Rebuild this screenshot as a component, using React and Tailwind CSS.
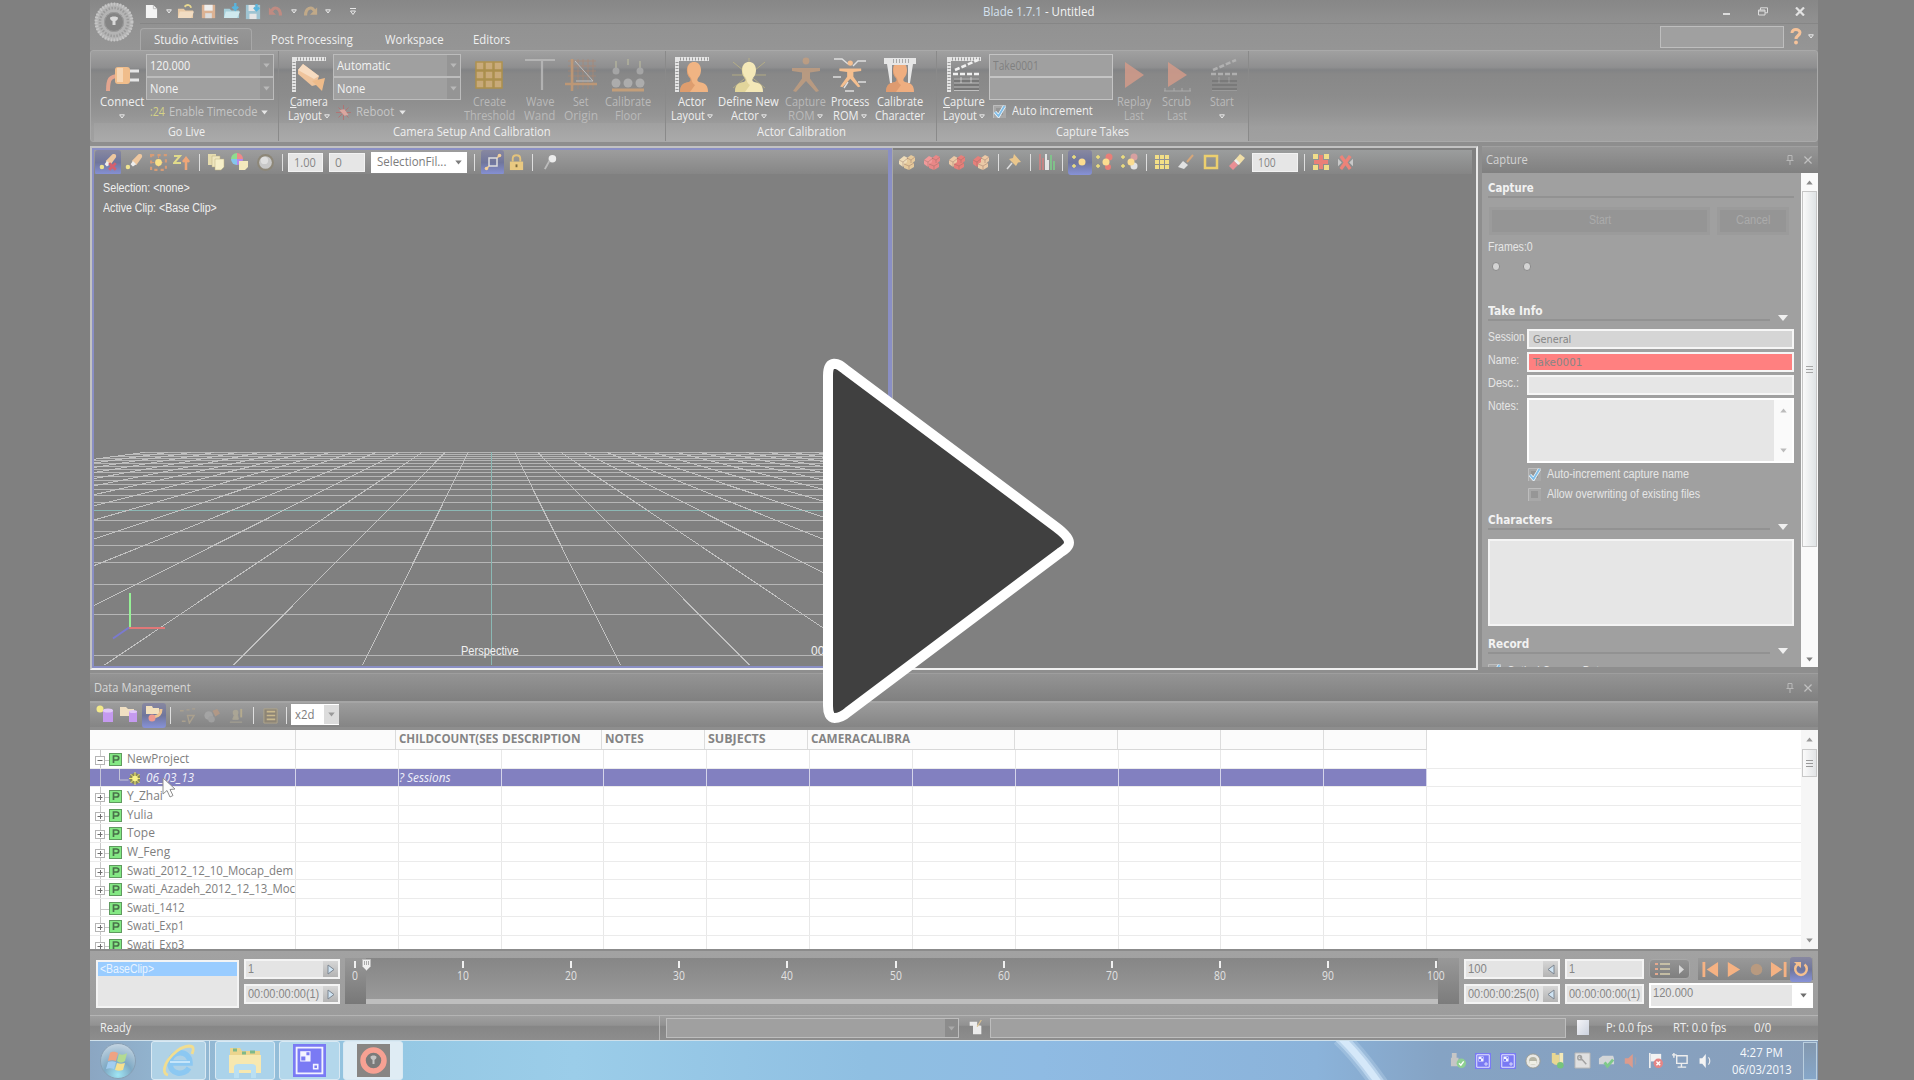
import React, { useLayoutEffect, useRef, useState } from "react";

/* Single-line label squeezed or stretched to a fixed width. */
function T({ w, className = "", children }) {
  const ref = useRef(null);
  const [k, setK] = useState(1);
  useLayoutEffect(() => {
    const n = ref.current.offsetWidth;
    if (n) setK(w / n);
  }, [w]);
  return (
    <span className={"inline-block whitespace-nowrap text-left " + className} style={{ width: w }}>
      <span ref={ref} className="inline-block origin-left" style={{ transform: `scaleX(${k})` }}>
        {children}
      </span>
    </span>
  );
}

const Sep = ({ c = "w-3" }) => (
  <div className={"flex shrink-0 justify-center " + c}>
    <div className="h-[17px] w-px bg-[#dedede]" />
  </div>
);

const Slot = ({ c, on, children }) => (
  <div
    className={
      "flex h-[25px] shrink-0 items-center justify-center " +
      c +
      (on ? " rounded-[3px] bg-gradient-to-b from-[#8888a0] via-[#70769c] to-[#8792d8]" : "")
    }
  >
    {children}
  </div>
);

const I = ({ s = 18, h, vb = "0 0 18 18", c = "", children }) => (
  <svg width={s} height={h || s} viewBox={vb} fill="none" className={"shrink-0 " + c}>
    {children}
  </svg>
);

const Down = ({ c = "text-[#e6e6e6]" }) => (
  <svg width="7" height="5" viewBox="0 0 7 5" className={"shrink-0 " + c}>
    <path d="M.3.5h6.4L3.5 4.5z" fill="currentColor" />
  </svg>
);
const DownO = () => (
  <svg width="6" height="5" viewBox="0 0 6 5" className="shrink-0">
    <path d="M.6.8h4.8L3 4z" fill="#999" stroke="#e8e8e8" strokeWidth="1" />
  </svg>
);

const Ruler = () => (
  <>
    <path d="M0 0h34v4H4v31H0z" fill="#e4e4e4" />
    <path d="M5 2h28M2 5v29" stroke="#9b9b9b" strokeWidth="3" strokeDasharray="1 2" />
  </>
);
const Bust = ({ a, b, x = 0 }) => (
  <g transform={`translate(${x} 0)`}>
    <path d="M0 35c0-7 3-9 9-10 2-1 2-2 1-4C5 16 6 5 14 5s9 11 4 16c-1 2-1 3 1 4 6 1 9 3 9 10z" fill={a} />
    <path d="M13 5C6 6 6 16 11 21c1 3 1 5 4 7l-5 7H0c0-7 3-9 9-10 2-1 2-2 1-4C5 16 6 6 13 5z" fill={b} opacity=".55" />
  </g>
);
const Man = ({ c }) => (
  <>
    <circle cx="17" cy="4" r="3.400" fill={c} />
    <path d="M3 11h28v3l-10 1.500v6L30 34l-3 1-10-11L7 35l-3-1 9-12.500v-6L3 14z" fill={c} />
  </>
);
const Clapper = ({ c }) => (
  <>
    <path d="M8 13L31 3M6 17h27" stroke={c} strokeWidth="2.600" strokeDasharray="5 2" />
    <path d="M7 21h25v13H7z" fill="#777" />
    <path d="M7 22h25M7 26h25M7 30h25M14 20v6M24 20v6M7 33.500h25" stroke={c} strokeWidth="1" opacity=".6" />
  </>
);

function BigBtn({ c, icon, a, aw, b, bw, arrow, dim, under }) {
  return (
    <div className={"flex shrink-0 flex-col items-center pt-[6px] " + c + (dim ? " text-[#bababa]" : " text-[#efefef]")}>
      <svg width="34" height="36" viewBox="0 0 34 36" fill="none" className={dim ? "opacity-80" : ""}>
        {icon}
      </svg>
      <div className={"mt-[2px] h-[14px] leading-[14px]" + (under ? " first-letter:underline" : "")}>
        <T w={aw}>{under ? <><u>{a[0]}</u>{a.slice(1)}</> : a}</T>
      </div>
      <div className="flex h-[14px] items-center gap-[2px] leading-[14px]">
        {b && <T w={bw}>{b}</T>}
        {arrow && <DownO />}
      </div>
    </div>
  );
}

function Group({ c, label, lw, children }) {
  return (
    <div className={"flex h-[90px] shrink-0 flex-col border-r border-[#8a8a8a] " + c}>
      <div className="flex h-[72px]">{children}</div>
      <div className="flex h-[18px] items-center justify-center bg-gradient-to-b from-[#a0a0a0] to-[#aaaaaa] leading-[16px] text-[#efefef]">
        <T w={lw}>{label}</T>
      </div>
    </div>
  );
}

function Combo({ v, w }) {
  return (
    <div className="flex h-[23px] w-[128px] items-center border border-[#bcbcbc] bg-[#a0a0a0] pl-[3px] leading-[18px] text-[#f3f3f3]">
      <T w={w}>{v}</T>
      <div className="ml-auto flex h-full w-[13px] items-center justify-center bg-[#959595]">
        <Down c="text-[#b8b8b8]" />
      </div>
    </div>
  );
}

const Check = ({ on }) => (
  <svg width="13" height="13" viewBox="0 0 13 13" className="shrink-0">
    <path d="M0 0h13v13H0z" fill="#a8a8a8" />
    <path d="M.5 13V.5H13" fill="none" stroke="#bdbdbd" />
    <path d="M3 3h7v7H3z" fill="#969696" />
    {on && (
      <>
        <path d="M2 7l3.500 4L11.500 1" fill="none" stroke="#eef7fc" strokeWidth="3.400" />
        <path d="M2 7l3.500 4L11.500 1" fill="none" stroke="#7fbde8" strokeWidth="1.800" />
      </>
    )}
  </svg>
);

const Pin = () => (
  <svg width="8" height="10" viewBox="0 0 8 10" fill="none" stroke="#b8b8b8">
    <path d="M2 .5h4v5H2zM.5 5.500h7M4 5.500V10" />
  </svg>
);
const X = () => (
  <svg width="8" height="8" viewBox="0 0 9 9" stroke="#c0c0c0" strokeWidth="1.400">
    <path d="M.5.5l8 8M8.500.5l-8 8" />
  </svg>
);

function TitleBar() {
  return (
    <div className="flex h-[50px] bg-gradient-to-b from-[#878787] via-[#929292] to-[#959595]">
      <div className="flex w-[50px] justify-center pr-[2px] pt-[2px]">
        <svg width="40" height="40" viewBox="0 0 40 40">
          <circle cx="20" cy="20" r="14.500" fill="none" stroke="#b4b4b4" strokeWidth="9" />
          <circle cx="20" cy="20" r="18" fill="none" stroke="#c6c6c6" strokeWidth="3" strokeDasharray="1.500 1.500" />
          <circle cx="20" cy="20" r="14" fill="none" stroke="#9b9b9b" strokeWidth="2.500" strokeDasharray="1.500 1.500" />
          <circle cx="20" cy="20" r="9.500" fill="#858585" stroke="#9c9c9c" />
          <path d="M16 16c0-2 8-2 8 0s-2 3-2.500 3v4h-3v-4c-.5 0-2.500-1-2.500-3z" fill="#dadada" />
        </svg>
      </div>
      <div className="flex min-w-0 flex-1 flex-col">
        <div className="flex h-6 items-center border-b border-[#868686]">
          <div className="flex w-[260px] items-center">
            <Slot c="w-[22px]"><I s={13} h={15} vb="0 0 14 16"><path d="M1 1h8l4 4v10H1z" fill="#f4f4f4" /><path d="M9 1v4h4" stroke="#bbb" /></I></Slot>
            <Slot c="w-[13px]"><DownO /></Slot>
            <Slot c="w-[20px]"><I s={17}><path d="M1 6h6l2 2h8v8H1z" fill="#e8c9a4" /><path d="M3 9h15l-3 7H1z" fill="#f1dcc2" /><path d="M8 4c3-3 6-2 7 1" stroke="#e8d890" strokeWidth="2" /></I></Slot>
            <Slot c="w-[26px]"><I s={15}><path d="M1 1h16v16H1z" fill="#dcb293" /><path d="M4 1h10v7H4z" fill="#eee" /><path d="M5 11h8v6H5z" fill="#ddd" /></I></Slot>
            <Slot c="w-[20px]"><I s={17}><path d="M1 6h6l2 2h8v8H1z" fill="#a6cfda" /><path d="M3 9h15l-3 7H1z" fill="#cfe9ee" /><path d="M13 0v6M10 4l3 3 3-3" stroke="#59b4dc" strokeWidth="2.500" /></I></Slot>
            <Slot c="w-[24px]"><I s={16}><path d="M1 1h16v16H1z" fill="#9fc4d2" /><path d="M4 1h7v7H4zM5 11h8v6H5z" fill="#e6e6e6" /><path d="M13 0v6M10 4l3 3 3-3" stroke="#59b4dc" strokeWidth="2.500" /></I></Slot>
            <Slot c="w-[22px]"><I s={16}><path d="M4 8C7 2 14 4 14 13" stroke="#bf8b82" strokeWidth="3.500" /><path d="M1 4v8h8z" fill="#bf8b82" /></I></Slot>
            <Slot c="w-[13px]"><DownO /></Slot>
            <Slot c="w-[20px]"><I s={16}><path d="M14 8C11 2 4 4 4 13" stroke="#c1a988" strokeWidth="3.500" /><path d="M17 4v8H9z" fill="#c1a988" /></I></Slot>
            <Slot c="w-[15px]"><DownO /></Slot>
            <Slot c="w-[36px]"><I s={6} h={8} vb="0 0 6 8"><path d="M0 .5h6M.5 3h5L3 6.500z" stroke="#e6e6e6" /></I></Slot>
          </div>
          <div className="ml-[583px] text-[12px] leading-[18px] text-[#f4f4f4]">
            <T w={111}><span className="text-[#d5e2ef]">Blade 1.7.1</span> - Untitled</T>
          </div>
          <div className="ml-auto flex items-center gap-[27px] pr-[13px]">
            <div className="mr-px mt-1 h-[2px] w-[7px] bg-[#dcdcdc]" />
            <svg width="10" height="9" viewBox="0 0 10 9" fill="none" stroke="#dcdcdc"><path d="M.5 3h6.500v5H.5zM2.500 3V.8h7v5H7M.5 4h6.500" /></svg>
            <svg width="10" height="9" viewBox="0 0 10 9" stroke="#e2e2e2" strokeWidth="2.200"><path d="M1 .5l8 8M9 .5l-8 8" /></svg>
          </div>
        </div>
        <div className="flex h-[26px] text-[12px] leading-[21px] text-[#f0f0f0]">
          <div className="mt-[4px] h-[22px] w-[112px] rounded-t-[4px] border border-b-0 border-[#a8a8a8] bg-gradient-to-b from-[#969696] to-[#8e8e8e] pl-[13px] pt-px leading-[19px]"><T w={84}>Studio Activities</T></div>
          <div className="ml-[19px] mt-[5px]"><T w={82}>Post Processing</T></div>
          <div className="ml-[32px] mt-[5px]"><T w={59}>Workspace</T></div>
          <div className="ml-[29px] mt-[5px]"><T w={37}>Editors</T></div>
          <div className="ml-auto mt-[2px] h-[22px] w-[124px] border border-[#bebebe] bg-[#a0a0a0]" />
          <svg width="12" height="18" viewBox="0 0 12 18" className="ml-[6px] mt-[4px]" fill="none"><path d="M2 5c0-5 8-4 8-.500 0 3-4 3-4 6.500" stroke="#f6c39a" strokeWidth="3" /><circle cx="6" cy="14.500" r="1.900" fill="#f6c39a" /></svg>
          <div className="ml-[6px] mr-[4px] mt-[10px]"><DownO /></div>
        </div>
      </div>
    </div>
  );
}

function Ribbon() {
  return (
    <div className="flex h-[92px] rounded-[3px] border border-[#a9a9a9] bg-[linear-gradient(#a0a0a0,#8f8f90_18%,#828385_21%,#888_26%,#8c8c8c_50%,#949494_70%,#9e9e9e_85%,#a0a0a0)] pl-[3px] text-[12px]">
      <Group c="w-[185px]" label="Go Live" lw={37}>
        <BigBtn c="w-[53px] pl-[2px]" a="Connect" aw={44} arrow icon={<><path d="M3 34c0-12 2-15 11-15" stroke="#e3a58f" strokeWidth="4" /><rect x="10" y="10" width="15" height="17" rx="3" fill="#f0bd8b" /><path d="M12 11h6v14h-6z" fill="#f6d6b4" /><path d="M25 14h9M25 23h9" stroke="#e6e6e6" strokeWidth="3" /></>} />
        <div className="-ml-px flex flex-col pt-[3px]">
          <Combo v="120.000" w={40} />
          <Combo v="None" w={28} />
          <div className="mt-[2px] flex h-[20px] items-center gap-1 pl-[4px] leading-[18px] text-[#c6c6c6]">
            <span className="text-[#d5d386]"><T w={15}>:24</T></span>
            <T w={88}>Enable Timecode</T><Down />
          </div>
        </div>
      </Group>
      <Group c="w-[387px]" label="Camera Setup And Calibration" lw={158}>
        <BigBtn c="w-[54px] pl-[6px]" a="Camera" under aw={38} b="Layout" bw={34} arrow icon={<><Ruler /><path d="M6 13l5-6 16 12-3 9-4 1L6 17z" fill="#efc49c" /><path d="M6 13l5-6 16 12-5 3z" fill="#f7dcc1" /><path d="M20 24l13-3-3 13z" fill="#eebb8a" /></>} />
        <div className="flex flex-col pt-[3px]">
          <Combo v="Automatic" w={53} />
          <Combo v="None" w={28} />
          <div className="mt-[2px] flex h-[20px] items-center gap-[5px] pl-[3px] leading-[18px] text-[#c6c6c6]">
            <I s={15}><path d="M9 0v18M0 9h18M3 3l12 12M15 3L3 15" stroke="#b56f6f" strokeWidth="1" /><path d="M4 6l6-1 5 7-5 1z" fill="#dba7a0" /></I>
            <T w={38}>Reboot</T><Down />
          </div>
        </div>
        <BigBtn c="w-[56px]" dim a="Create" aw={33} b="Threshold" bw={51} icon={<>{[0, 1, 2].map((r) => [0, 1, 2].map((q) => <rect key={r + "-" + q} x={4 + q * 9} y={5 + r * 9} width="8" height="8" fill="#d8b276" stroke="#b6923e" strokeWidth="1.500" />))}</>} />
        <BigBtn c="w-[45px]" dim a="Wave" aw={28} b="Wand" bw={31} icon={<path d="M2 3h30M19 4v29" stroke="#bcbcbc" strokeWidth="2.200" />} />
        <BigBtn c="w-[38px]" dim a="Set" aw={16} b="Origin" bw={34} icon={<><path d="M4 4h28M4 9h28M4 14h28M4 19h28M9 2v30M14 2v30M19 2v30M24 2v30M29 2v30" stroke="#b08872" strokeWidth=".8" /><path d="M8 2v32M1 27h32" stroke="#c99b72" strokeWidth="2.500" /><path d="M11 4l18 20H12" stroke="#ccc" /></>} />
        <BigBtn c="w-[54px] pl-[2px]" dim a="Calibrate" aw={46} b="Floor" bw={27} icon={<><path d="M5 14V4M17 8V2M29 14V4" stroke="#b0b09c" strokeWidth="2" /><path d="M1 33h32" stroke="#d0a377" strokeWidth="3" />{[5, 17, 29].map((x) => <circle key={x} cx={x} cy="26" r="4.500" fill="#b5b5b5" />)}<circle cx="5" cy="14" r="3.500" fill="#adadad" /><circle cx="29" cy="14" r="3.500" fill="#adadad" /></>} />
      </Group>
      <Group c="w-[271px]" label="Actor Calibration" lw={89}>
        <BigBtn c="w-[50px] pl-[1px]" a="Actor" aw={28} b="Layout" bw={34} arrow icon={<><Ruler /><Bust a="#f0b483" b="#cf8b5c" x={5} /></>} />
        <BigBtn c="w-[64px] pl-[1px]" a="Define New" aw={61} b="Actor" bw={28} arrow icon={<><path d="M1 5l32 26M33 5L1 31M0 18h34M17 1v20" stroke="#bdb483" strokeWidth=".8" /><Bust a="#f4e8b8" b="#d3c483" x={3} /></>} />
        <BigBtn c="w-[48px] pl-[3px]" dim a="Capture" aw={41} b="ROM" bw={27} arrow icon={<Man c="#c49f80" />} />
        <BigBtn c="w-[43px]" a="Process" aw={38} b="ROM" bw={26} arrow icon={<><path d="M1 2h8l6 5M33 4h-8l-5 5M0 20h8M33 25h-8M12 34h9M11 31l4-6" stroke="#dedede" strokeWidth="1.400" /><g transform="translate(4 3) scale(.78)"><Man c="#f5bf8f" /></g></>} />
        <BigBtn c="w-[57px]" a="Calibrate" aw={46} b="Character" bw={50} icon={<><Bust a="#efae80" b="#cf8c62" x={3} /><path d="M1 1h32v6h-3l-3 19h-2V8H9v18H7L4 7H1z" fill="#e6e6e6" /><path d="M10 4h16" stroke="#aaa" strokeWidth="4" strokeDasharray="1 2" /></>} />
      </Group>
      <Group c="w-[312px]" label="Capture Takes" lw={73}>
        <BigBtn c="w-[52px] pl-[2px]" a="Capture" under aw={42} b="Layout" bw={34} arrow icon={<><Ruler /><Clapper c="#f0f0f0" /></>} />
        <div className="flex w-[124px] flex-col pt-[3px] text-[#808080]">
          <div className="h-[23px] border border-[#c4c4c4] bg-[#a0a0a0] pl-[3px] leading-[22px]"><T w={46}>Take0001</T></div>
          <div className="h-[23px] border border-[#c4c4c4] bg-[#a0a0a0]" />
          <div className="mt-[1px] flex h-[20px] items-center gap-[6px] pl-[4px] leading-[18px] text-[#efefef]"><Check on /><T w={81}>Auto increment</T></div>
        </div>
        <BigBtn c="w-[42px]" dim a="Replay" aw={34} b="Last" bw={20} icon={<path d="M8 5l19 13L8 31z" fill="#d79c8a" />} />
        <BigBtn c="w-[43px]" dim a="Scrub" aw={29} b="Last" bw={20} icon={<><path d="M8 5l19 13L8 30z" fill="#d79c8a" /><path d="M4 34h27M5 31v3M14 31v3M22 31v3M30 31v3" stroke="#b5b5b5" /></>} />
        <BigBtn c="w-[48px]" dim a="Start" aw={24} arrow icon={<Clapper c="#b9b9b9" />} />
      </Group>
    </div>
  );
}

const Num = ({ c, v, w }) => (
  <div className={"h-[19px] shrink-0 border border-[#f2f2f2] bg-[#e6e6e6] pl-[5px] text-[12px] leading-[17px] text-[#868686] " + c}>
    <T w={w}>{v}</T>
  </div>
);

const VX = 491.5 - 94;
const HY = 406 - 174;
const SPREAD = 0.498;
const ROWS = Array.from({ length: 23 }, (_, i) => i - 15).map((j) => ({ j, y: HY + 1 / (0.00959 - 0.000797 * j) }));
const FAR = ROWS[0].y;

function GridFloor() {
  const bottom = 491;
  return (
    <svg className="absolute inset-0" width="796" height="491" viewBox="0 0 796 491" fill="none">
      {ROWS.map(({ j, y }) => {
        const half = 15 * SPREAD * (y - HY);
        const row = Math.round(y) + 0.5;
        return <path key={j} d={`M${VX - half} ${row}H${VX + half}`} stroke={j === 0 ? "#8bb8b4" : "#b6b6b6"} />;
      })}
      {Array.from({ length: 31 }, (_, i) => i - 15).map((i) => (
        <path
          key={i}
          d={`M${VX + i * SPREAD * (FAR - HY)} ${FAR}L${VX + i * SPREAD * (bottom - HY)} ${bottom}`}
          stroke={i === 0 ? "#8bb8b4" : "#c2c2c2"}
          shapeRendering="crispEdges"
        />
      ))}
      <path d="M36 419v34" stroke="#96f096" strokeWidth="2" />
      <path d="M35 454h36" stroke="#e07878" strokeWidth="2" />
      <path d="M35 453.500l-16 11" stroke="#7a7ad0" strokeWidth="2" />
    </svg>
  );
}

const Cubes = ({ a, b }) => (
  <I s={18}>
    <path d="M1 7l5-4 4 2v5l-5 4-4-3z" fill={a} />
    <path d="M9 5l4-3 4 2v4l-4 3-4-2z" fill={b} />
    <path d="M6 11l5-3 5 2v4l-5 3-5-2z" fill={b} />
    <path d="M1 7l4 2 5-4M5 9v5M9 5l4 2 4-3M13 7v3M6 11l5 2 5-3M11 13v4" stroke="#8b6a5e" strokeWidth=".8" opacity=".5" />
  </I>
);
const Brush = ({ c = "#eec79f", x }) => (
  <I s={20}>
    <path d="M7 8l6-6c3-1 4 1 3 3l-5 7z" fill={c} />
    <path d="M8 8l3 3-3 2-2-2z" fill="#eee" />
    <circle cx="3.500" cy="13.500" r="2" fill="#f0e490" />
    {x && <path d="M10 10l6 6M16 10l-6 6" stroke="#d4606e" strokeWidth="2.500" />}
  </I>
);
const Dots = ({ children }) => (
  <I s={18}>
    <path d="M1 4h4M1 13h4M3 2v4M3 11v4" stroke="#efe07e" strokeWidth="1.400" />
    {children}
    <circle cx="11" cy="9" r="3.500" fill="#fbdc90" />
  </I>
);

function Viewports() {
  return (
    <div className="flex h-[524px] w-[1388px] border-2 border-l-2 border-[#c2c2c2] border-b-[#f0f0f0] border-r-[#e9e9e9]">
      <div className="flex w-[800px] flex-col border-2 border-r-[4px] border-[#8a8fc4]">
        <div className="flex h-[24px] items-center bg-gradient-to-b from-[#9d9d9d] to-[#868686]">
          <Slot c="w-[26px] ml-[1px]" on><Brush x /></Slot>
          <Slot c="w-[25px]"><Brush /></Slot>
          <Slot c="w-[24px]"><I s={19}><path d="M2 2h14v14H2z" stroke="#d69c76" strokeWidth="2" strokeDasharray="3 3" /><path d="M9 3v12M3 9h12" stroke="#d69c76" strokeDasharray="2 2" /><circle cx="9" cy="9" r="3.200" fill="#f8e088" /></I></Slot>
          <Slot c="w-[24px]"><I><path d="M1 3h6L1 10h7" stroke="#e0da8a" strokeWidth="2" /><path d="M13 17V7M10 9l3-4 3 4" stroke="#efa678" strokeWidth="2.500" /></I></Slot>
          <Sep c="w-[11px]" />
          <Slot c="w-[21px]"><I><path d="M1 1h8v11H1z" fill="#e6dcae" /><path d="M5 3h8v11H5z" fill="#efe6bd" stroke="#b9ae80" strokeWidth=".5" /><path d="M8 6h9v8l-3 3H8z" fill="#f6efc9" stroke="#b9ae80" strokeWidth=".5" /></I></Slot>
          <Slot c="w-[27px]"><I><path d="M6 6V0a6 6 0 016 6z" fill="#ee8a8a" /><path d="M6 6H0a6 6 0 016-6z" fill="#8fdd8f" /><path d="M6 6v6a6 6 0 01-6-6z" fill="#85c5ee" /><path d="M6 6h6a6 6 0 01-6 6z" fill="#b58aee" /><path d="M8 8h9v6l-3 3H8z" fill="#f3e8bd" /></I></Slot>
          <Slot c="w-[24px]"><I s={19}><circle cx="9" cy="9" r="8" fill="#8d8778" /><circle cx="9" cy="9" r="6" fill="#c8c8c8" /><circle cx="8" cy="7" r="3.500" fill="#dfdfdf" /></I></Slot>
          <Sep c="w-[11px]" />
          <Num c="w-[35px]" v="1.00" w={22} />
          <Num c="ml-[6px] w-[36px]" v="0" w={7} />
          <div className="ml-[6px] flex h-[21px] w-[96px] items-center bg-white pl-[6px] pr-[5px] text-[12px] leading-[18px] text-[#7c7c7c]">
            <T w={69}>SelectionFil...</T><span className="ml-auto"><Down c="text-[#7d7d7d]" /></span>
          </div>
          <Sep c="w-[14px]" />
          <Slot c="w-[23px]" on><I><path d="M5 5h8v8H5z" stroke="#ddd" strokeWidth="1.500" /><path d="M13 5l3-3M5 13l-3 3" stroke="#efcf9c" strokeWidth="1.500" /><circle cx="15.500" cy="2.500" r="1.800" fill="#f2cf9a" /><circle cx="2.500" cy="15.500" r="1.800" fill="#f2cf9a" /></I></Slot>
          <Slot c="w-[24px]"><I s={17}><path d="M5 8V5c0-5 8-5 8 0v3" stroke="#e3c37c" strokeWidth="2" /><path d="M2 8h14v9H2z" fill="#e9c981" /><path d="M9 11v3" stroke="#7c6a3c" strokeWidth="2" /></I></Slot>
          <Sep c="w-[9px]" />
          <Slot c="w-[26px]"><I s={17}><circle cx="11" cy="5" r="4" fill="#ececec" /><path d="M8 7L3 16" stroke="#bcbcbc" strokeWidth="2" /></I></Slot>
        </div>
        <div className="relative h-[492px] flex-1 overflow-hidden bg-[#808080]">
          <GridFloor />
          <div className="relative flex h-full flex-col pl-[9px] pt-[4px] font-['Liberation_Sans'] text-[12px] leading-[20px] text-[#f0f0f0]">
            <T w={87}>Selection: &lt;none&gt;</T>
            <T w={114}>Active Clip: &lt;Base Clip&gt;</T>
            <div className="mb-[5px] mt-auto flex pl-[358px]"><T w={58}>Perspective</T><T w={40} className="ml-[292px]">000000</T></div>
          </div>
        </div>
      </div>
      <div className="flex flex-1 flex-col border-l border-[#a8a8a8] bg-[#808080] pr-1">
        <div className="mt-[2px] flex h-[24px] items-center bg-gradient-to-b from-[#9b9d9d] to-[#858585] pl-px">
          <Slot c="w-[25px]"><Cubes a="#eedcb9" b="#e5c99c" /></Slot>
          <Slot c="w-[25px]"><Cubes a="#f09a9a" b="#e98787" /></Slot>
          <Slot c="w-[25px]"><Cubes a="#ebc9a6" b="#e67f7a" /></Slot>
          <Slot c="w-[23px]"><Cubes a="#e67f7a" b="#ebc9a6" /></Slot>
          <Sep c="w-[12px]" />
          <Slot c="w-[19px]"><I><path d="M9 1l7 8-3 .5-2 3.500-7-7 4-1z" fill="#eac68c" /><path d="M7 10l-5 6" stroke="#ddd" strokeWidth="1.500" /></I></Slot>
          <Sep c="w-[14px]" />
          <Slot c="w-[19px]"><I><path d="M2 1v16M5 5v12" stroke="#c98484" strokeWidth="1.800" /><path d="M8 1v16M10 7v10" stroke="#eee" strokeWidth="1.800" /><path d="M13 2v15M16 8v9" stroke="#7fc78a" strokeWidth="1.800" /></I></Slot>
          <Sep c="w-[12px]" />
          <Slot c="w-[24px]" on><Dots /></Slot>
          <Slot c="w-[24px]"><Dots><circle cx="14" cy="4" r="3.500" fill="#e77f78" /><circle cx="13" cy="14" r="3" fill="#e77f78" /></Dots></Slot>
          <Slot c="w-[25px]"><Dots><circle cx="14" cy="4" r="3.500" fill="#d7a0a0" /><circle cx="14" cy="13" r="3.500" fill="#e2e2e2" /></Dots></Slot>
          <Sep c="w-[10px]" />
          <Slot c="w-[22px]"><I s={16} vb="0 0 16 16">{[1, 6, 11].map((x) => [1, 6, 11].map((y) => <rect key={x + "_" + y} x={x} y={y} width="4" height="4" fill="#f3df86" />))}</I></Slot>
          <Slot c="w-[25px]"><I><path d="M16 2l-6 7" stroke="#d6a77a" strokeWidth="2" /><path d="M6 8l5 4-4 4-6-2z" fill="#e2e2e2" /></I></Slot>
          <Slot c="w-[26px]"><I s={16} vb="0 0 16 16"><path d="M2 2h12v12H2z" stroke="#eccf6e" strokeWidth="2.500" /></I></Slot>
          <Slot c="w-[25px]"><I><path d="M12 1l5 4-6 7-5-4z" fill="#f1dfa8" /><path d="M8 6l4 4-2 2-4-4z" fill="#eee" /><path d="M6 8l4 4-5 5-4-4z" fill="#ea8f95" /></I></Slot>
          <Num c="ml-[3px] w-[46px]" v="100" w={18} />
          <Sep c="w-[13px]" />
          <Slot c="w-[20px]"><I s={16} vb="0 0 16 16"><path d="M0 0h5v5H0zM11 0h5v5h-5zM0 11h5v5H0zM11 11h5v5h-5z" fill="#f0dd8a" /><path d="M8 1v14M1 8h14" stroke="#ea8078" strokeWidth="4" /></I></Slot>
          <Slot c="w-[28px]"><I s={15} vb="0 0 16 16"><path d="M0 4l4 4-4 4M16 4l-4 4 4 4" fill="#c8c8c8" /><path d="M3 1l10 14M13 1L3 15" stroke="#ec8379" strokeWidth="3.500" /></I></Slot>
        </div>
      </div>
    </div>
  );
}

function Head({ c, t, w, arrow, lw = "w-[282px]" }) {
  return (
    <div className={"flex h-[22px] " + c}>
      <div className={"h-[21px] border-b-2 border-[#929292] font-['DejaVu_Sans'] text-[11.5px] font-bold leading-[22px] text-[#f2f2f2] " + lw}><T w={w}>{t}</T></div>
      {arrow && <svg width="10" height="6" viewBox="0 0 10 6" className="ml-[8px] mt-[15px]"><path d="M0 0h10L5 6z" fill="#f0f0f0" /></svg>}
    </div>
  );
}
const Field = ({ t, w, v, vw, c }) => (
  <div className="mb-[3px] flex h-[20px]">
    <div className="w-[39px] leading-[16px]"><T w={w}>{t}</T></div>
    <div className={"h-[20px] w-[267px] border-2 border-[#f6f6f6] pl-[4px] font-['DejaVu_Sans'] text-[11px] leading-[18px] text-[#868686] " + c}>{v && <T w={vw}>{v}</T>}</div>
  </div>
);

function CapturePanel() {
  return (
    <div className="ml-[4px] flex h-[524px] w-[336px] flex-col overflow-hidden">
      <div className="flex h-[27px] items-center gap-[10px] border-t border-[#a0a0a0] bg-gradient-to-b from-[#969696] to-[#808080] pl-[4px] pr-[6px] text-[12px] text-[#d4d4d4]">
        <T w={42}>Capture</T><span className="ml-auto"><Pin /></span><X />
      </div>
      <div className="flex h-[497px]">
        <div className="flex h-[494px] w-[319px] flex-col overflow-hidden bg-[#a0a0a0] pl-[6px] font-['Liberation_Sans'] text-[12px] text-[#e6e6e6]">
          <Head c="mt-[4px]" t="Capture" w={46} lw="w-[306px]" />
          <div className="mt-[12px] flex gap-[9px] pl-[4px] text-[#ababab]">
            <div className="h-[22px] w-[215px] bg-[#959595] text-center leading-[20px] shadow-[0_0_0_3px_#9b9b9b]"><T w={22}>Start</T></div>
            <div className="ml-[4px] h-[22px] w-[66px] bg-[#959595] text-center leading-[20px] shadow-[0_0_0_3px_#9b9b9b]"><T w={34}>Cancel</T></div>
          </div>
          <div className="mt-[7px] leading-[16px]"><T w={45}>Frames:0</T></div>
          <div className="mt-[7px] flex gap-[23px] pl-[4px]">
            <div className="h-[9px] w-[8px] rounded-full border border-[#8b8b8b] bg-[#d4d4d4]" />
            <div className="h-[9px] w-[8px] rounded-full border border-[#8b8b8b] bg-[#d4d4d4]" />
          </div>
          <Head c="mt-[29px]" t="Take Info" w={55} arrow />
          <div className="mt-[8px]">
            <Field t="Session" w={37} v="General" vw={38} c="bg-[#d5d5d5]" />
            <Field t="Name:" w={31} v="Take0001" vw={49} c="bg-[#ff8080]" />
            <Field t="Desc.:" w={31} c="bg-[#e6e6e6]" />
            <div className="flex h-[65px]">
              <div className="w-[39px] leading-[16px]"><T w={31}>Notes:</T></div>
              <div className="flex w-[267px] border-2 border-white bg-[#e6e6e6]">
                <div className="ml-auto flex w-[18px] flex-col items-center justify-between bg-[#fafafa] py-2"><span className="rotate-180"><Down c="text-[#bbb]" /></span><Down c="text-[#bbb]" /></div>
              </div>
            </div>
          </div>
          <div className="ml-[40px] mt-[4px] flex h-[14px] items-center gap-[6px]"><Check on /><T w={142}>Auto-increment capture name</T></div>
          <div className="ml-[40px] mt-[6px] flex h-[14px] items-center gap-[6px]"><Check /><T w={153}>Allow overwriting of existing files</T></div>
          <Head c="mt-[8px]" t="Characters" w={64} arrow />
          <div className="mt-[9px] h-[87px] w-[306px] shrink-0 border-2 border-[#f4f4f4] bg-[#e6e6e6]" />
          <Head c="mt-[7px] shrink-0" t="Record" w={41} arrow />
          <div className="mt-[9px] flex shrink-0 items-start gap-[6px]"><Check on /><span className="leading-[15px]"><T w={98}>Optical Camera Data</T></span></div>
        </div>
        <div className="flex h-[494px] w-[17px] flex-col items-center bg-[#fafafa]">
          <div className="flex h-[18px] items-center"><span className="rotate-180"><Down c="text-[#8a8a8a]" /></span></div>
          <div className="flex h-[356px] w-[15px] flex-col items-center justify-center gap-[2px] border border-[#c6c6c6] bg-gradient-to-r from-[#fafafa] to-[#dfe3e5]">
            <div className="h-px w-[7px] bg-[#a5a5a5]" /><div className="h-px w-[7px] bg-[#a5a5a5]" /><div className="h-px w-[7px] bg-[#a5a5a5]" />
          </div>
          <div className="mb-[5px] mt-auto"><Down c="text-[#808080]" /></div>
        </div>
      </div>
    </div>
  );
}

const PROJECTS = [
  ["NewProject", 62, "-"], ["06_03_13", 48, "child"], ["Y_Zhai", 36, "+"], ["Yulia", 26, "+"], ["Tope", 28, "+"],
  ["W_Feng", 43, "+"], ["Swati_2012_12_10_Mocap_dem", 166, "+"], ["Swati_Azadeh_2012_12_13_Moc", 168, "+"],
  ["Swati_1412", 58, ""], ["Swati_Exp1", 57, "+"], ["Swati_Exp3", 57, "+"],
];
const HEADS = [["CHILDCOUNT(SES", 99], ["DESCRIPTION", 79], ["NOTES", 39], ["SUBJECTS", 58], ["CAMERACALIBRA", 99], null, null, null, null, null];

function Tree({ name, w, kind }) {
  if (kind === "child")
    return (
      <>
        <svg width="50" height="19" viewBox="0 0 50 19" fill="none" className="shrink-0">
          <path d="M10.500 0v19M29.500 0v11h9" stroke="#c4c4d8" />
          <circle cx="45" cy="9.500" r="5.500" fill="#8a8a58" /><path d="M45 3v13M39 9.500h12M40.500 5l9 9M49.500 5l-9 9" stroke="#f0ea70" /><circle cx="45" cy="9.500" r="2.800" fill="#f8f38a" />
        </svg>
        <span className="ml-[6px] italic"><T w={w}>{name}</T></span>
      </>
    );
  return (
    <>
      <svg width="33" height="19" viewBox="0 0 33 19" fill="none" className="shrink-0">
        <path d="M10.500 0v19M10 10.500h9" stroke="#c8c8c8" />
        {kind && <><rect x="5.500" y="6.500" width="9" height="8" fill="#fff" stroke="#b5b5b5" /><path d={kind === "-" ? "M7.500 10.500h5" : "M7.500 10.500h5M10.500 8v5"} stroke="#6e6e6e" /></>}
        <rect x="19.500" y="3.500" width="12" height="12" fill="#84e884" stroke="#5f9a5f" />
        <path d="M23.500 13V6h3c3 0 3 4 0 4h-3" stroke="#4a724a" strokeWidth="1.700" />
      </svg>
      <span className="ml-[4px]"><T w={w}>{name}</T></span>
    </>
  );
}

function DataManagement() {
  return (
    <div className="flex h-[279px] flex-col">
      <div className="mt-[3px] flex h-[28px] items-center gap-[10px] border-t border-[#9e9e9e] bg-gradient-to-b from-[#949494] to-[#808080] pl-[4px] pr-[6px] text-[12px] leading-[16px] text-[#d8d8d8]">
        <T w={97}>Data Management</T><span className="ml-auto"><Pin /></span><X />
      </div>
      <div className="flex h-[26px] items-center border-t-2 border-[#a5a5a5] bg-gradient-to-b from-[#9c9c9c] to-[#858585]">
        <Slot c="w-[29px] pb-[2px]"><I><circle cx="4" cy="4" r="3.500" fill="#f3e98a" /><path d="M7 5h10v12H7z" fill="#c59af0" /><ellipse cx="12" cy="5.500" rx="5" ry="2" fill="#e1c8f8" /></I></Slot>
        <Slot c="w-[20px] pb-[2px]"><I><path d="M0 2h6l2 2h6v7H0z" fill="#f0dfc2" /><path d="M9 6h8v11H9z" fill="#c59af0" /><ellipse cx="13" cy="6.500" rx="4" ry="1.600" fill="#e1c8f8" /></I></Slot>
        <Slot c="w-[24px] ml-[3px] pb-[2px]" on><I><path d="M1 1h6l1 2h6v6H1z" fill="#f3e0bd" /><path d="M16 4c0 7-4 7-7 8" stroke="#eec592" strokeWidth="3" /><circle cx="7" cy="13" r="3.500" fill="#ee9a90" /></I></Slot>
        <Sep c="w-[9px]" />
        <Slot c="w-[24px]"><I s={17}><path d="M1 4h4M8 3h3M14 2h3M3 15h4M9 9l7 0-5 8z" stroke="#aaa08e" strokeWidth="1.500" /></I></Slot>
        <Slot c="w-[24px]"><I s={17}><circle cx="6" cy="9" r="4.500" fill="#a4a4a4" /><circle cx="9" cy="13" r="3.500" fill="#9f9f9f" /><path d="M10 4l5-2 3 5-5 3z" fill="#b19886" /></I></Slot>
        <Slot c="w-[26px]"><I s={17}><path d="M2 16h13M5 13h6l-1-5H7z" stroke="#aaa595" fill="#aaa595" /><circle cx="8" cy="6" r="3" fill="#aaa595" /><path d="M14 2v9" stroke="#b5ab8e" strokeWidth="2" /></I></Slot>
        <Sep c="w-[9px]" />
        <Slot c="w-[24px]"><I s={17}><path d="M2 2h14v15H2z" fill="#8d8576" stroke="#b0a68c" /><path d="M5 5h9M5 9h9M5 13h9" stroke="#c9b98e" strokeWidth="1.800" /></I></Slot>
        <Sep c="w-[9px]" />
        <div className="mb-px flex h-[21px] w-[48px] items-center bg-white pl-[4px] text-[12px] leading-[18px] text-[#7d7d7d]"><T w={19}>x2d</T><div className="ml-auto flex h-[19px] w-[15px] items-center justify-center bg-[#dcdcdc]"><Down c="text-[#999]" /></div></div>
      </div>
      <div className="mt-[3px] flex h-[219px] bg-white text-[12px] text-[#7e7e7e]">
        <div className="flex w-[1711px] flex-col overflow-hidden">
          <div className="flex h-[20px] w-[1337px] shrink-0 border-b border-[#d8d8d8] bg-[#fbfbfb] font-bold leading-[18px]">
            <div className="w-[206px] shrink-0 border-r border-[#dcdcdc]" />
            <div className="flex-1 basis-0 border-r border-[#dcdcdc]" />
            {HEADS.map((h, i) => (
              <div key={i} className={"min-w-0 flex-1 basis-0 overflow-hidden whitespace-nowrap border-r pl-[3px] text-[#848484] " + (i === 0 || i === 4 ? "border-transparent" : "border-[#dcdcdc]")}>{h && <T w={h[1]}>{h[0]}</T>}</div>
            ))}
          </div>
          {PROJECTS.map(([n, w, k], r) => (
            <div key={n} className="flex h-[18.6px] shrink-0 border-b border-[#ebebeb] leading-[18px]">
              <div className={"flex w-[1337px] " + (r === 1 ? "bg-[#8280c0] text-[#f0f0fa]" : "")}>
                <div className={"flex w-[206px] shrink-0 overflow-hidden border-r " + (r === 1 ? "border-[#d4d4ea]" : "border-[#e4e4e4]")}><Tree name={n} w={w} kind={k} /></div>
                {Array.from({ length: 11 }, (_, i) => (
                  <div key={i} className={"min-w-0 flex-1 basis-0 border-r italic " + (r === 1 ? "border-[#d4d4ea]" : "border-[#e8e8e8]")}>{r === 1 && i === 1 && <T w={52}>? Sessions</T>}</div>
                ))}
              </div>
            </div>
          ))}
        </div>
        <div className="flex w-[17px] flex-col items-center bg-[#f6f6f6]">
          <div className="flex h-[19px] items-center"><span className="rotate-180"><Down c="text-[#999]" /></span></div>
          <div className="flex h-[28px] w-[15px] flex-col items-center justify-center gap-[2px] border border-[#c8c8c8] bg-gradient-to-r from-[#fbfbfb] to-[#e2e4e6]"><div className="h-px w-[7px] bg-[#999]" /><div className="h-px w-[7px] bg-[#999]" /><div className="h-px w-[7px] bg-[#999]" /></div>
          <div className="mb-[6px] mt-auto"><Down c="text-[#909090]" /></div>
        </div>
      </div>
    </div>
  );
}

const Spin = ({ v, w, left, c = "w-[96px]" }) => (
  <div className={"flex h-[20px] items-center border-2 border-[#f4f4f4] bg-[#e4e4e4] pl-[2px] font-['Liberation_Sans'] text-[12.5px] leading-[16px] text-[#868686] " + c}>
    <T w={w}>{v}</T>
    {left !== undefined && (
      <div className="ml-auto flex h-[16px] w-[15px] items-center justify-center bg-gradient-to-b from-[#d6d6d6] to-[#b4b4b4]">
        <svg width="8" height="11" viewBox="0 0 8 11" className={left ? "rotate-180" : ""}><path d="M1 1l6 4.500L1 10z" fill="#cfe3f2" stroke="#7e8791" /></svg>
      </div>
    )}
  </div>
);

function Timeline() {
  return (
    <div className="flex h-[66px] border-t-2 border-[#8b8b8b] bg-gradient-to-b from-[#a2a2a2] to-[#9c9c9c] pl-[6px] pt-[7px]">
      <div className="mt-[2px] h-[48px] w-[143px] border-2 border-[#f4f4f4] bg-[#e6e6e6] font-['Liberation_Sans'] text-[12px]"><div className="h-[14px] bg-[#99ccff] pl-[2px] leading-[14px] text-[#e9f4ff]"><T w={54}>&lt;BaseClip&gt;</T></div></div>
      <div className="ml-[5px] mt-[1px] flex flex-col gap-[5px]"><Spin v="1" w={6} left={false} /><Spin v="00:00:00:00(1)" w={71} left={false} /></div>
      <div className="ml-[5px] flex h-[46px] w-[1114px] bg-gradient-to-b from-[#868686] to-[#9c9c9c]">
        <div className="w-[21px] shrink-0 bg-gradient-to-b from-[#989898] to-[#787878]" />
        <div className="flex-1 border-b-[5px] border-[#bebebe]">
          <div className="-ml-[65px] -mr-[52px] flex">
            {Array.from({ length: 11 }, (_, i) => (
              <div key={i} className="relative flex flex-1 flex-col items-center pt-[3px] text-[12px] leading-[16px] text-[#e2e2e2]">
                <div className="h-[7px] w-[2px] bg-[#f0f0f0]" />
                <T w={i === 0 ? 6 : i === 10 ? 18 : 12}>{i * 10}</T>
                {i === 0 && <svg width="9" height="12" viewBox="0 0 9 12" className="absolute left-[61px] top-[1px]"><path d="M.5.5h8v7l-4 4-4-4z" fill="#f0f0f0" stroke="#bbb" /><path d="M2.500 2v4M4.500 2v4M6.500 2v4" stroke="#aaa" /></svg>}
              </div>
            ))}
          </div>
        </div>
        <div className="w-[21px] shrink-0 bg-gradient-to-b from-[#989898] to-[#7c7c7c]" />
      </div>
      <div className="ml-[5px] mt-[1px] flex flex-col gap-[5px]"><Spin v="100" w={19} left /><Spin v="00:00:00:25(0)" w={71} left /></div>
      <div className="ml-[5px] mt-[1px] flex flex-col gap-[5px]"><Spin v="1" w={6} c="w-[79px]" /><Spin v="00:00:00:00(1)" w={71} c="w-[79px]" /></div>
      <div className="ml-[5px] flex w-[164px] flex-col gap-[3px]">
        <div className="flex h-[22px] items-center">
          <div className="flex h-[20px] w-[41px] items-center justify-between rounded border border-[#a8a8a8] bg-gradient-to-b from-[#949494] to-[#7f7f7f] px-[5px]">
            <I s={15} h={14} vb="0 0 15 14"><path d="M0 2h3M0 7h3M0 12h3" stroke="#e5a98e" strokeWidth="2" /><path d="M5 2h10M5 7h10M5 12h10" stroke="#d9cfae" strokeWidth="1.600" /></I>
            <I s={5} h={9} vb="0 0 5 9"><path d="M0 0l5 4.500L0 9z" fill="#d8d8d8" /></I>
          </div>
          <div className="ml-[8px] flex h-[22px] flex-1 items-center bg-gradient-to-b from-[#999] to-[#858585]">
            <Slot c="w-[24px]"><I s={17}><path d="M2 1v16" stroke="#f5b283" strokeWidth="3" /><path d="M17 1v16L5 9z" fill="#f5b283" /></I></Slot>
            <Slot c="w-[23px]"><I s={17}><path d="M3 1l13 8L3 17z" fill="#f5b283" /></I></Slot>
            <Slot c="w-[22px]"><I s={13}><circle cx="9" cy="9" r="8" fill="#b89a80" /></I></Slot>
            <Slot c="w-[23px]"><I s={17}><path d="M16 1v16" stroke="#f5b283" strokeWidth="3" /><path d="M1 1v16l12-8z" fill="#f5b283" /></I></Slot>
            <Slot c="w-[22px]" on><I s={16}><path d="M5 4a6.500 6.500 0 108 0" stroke="#f5c08f" strokeWidth="2.800" /><path d="M1 1h8v7z" fill="#f5c08f" /></I></Slot>
          </div>
        </div>
        <div className="flex h-[25px] items-center bg-white pr-[6px]"><div className="h-[21px] w-[143px] border-l-2 border-white bg-[#e6e6e6] pl-[2px] font-['Liberation_Sans'] text-[12.5px] leading-[16px] text-[#868686]"><T w={40}>120.000</T></div><span className="ml-auto"><Down c="text-[#6e6e6e]" /></span></div>
      </div>
    </div>
  );
}

function StatusBar() {
  return (
    <div className="flex h-[25px] items-center border-t border-[#b4b4b4] bg-[linear-gradient(#9f9f9f,#929292_38%,#868686_44%,#8d8d8d)] text-[12px] leading-[16px] text-[#f0f0f0]">
      <div className="flex h-full w-[570px] items-center border-r border-[#b4b4b4] pb-px pl-[10px]"><T w={31}>Ready</T></div>
      <div className="ml-[6px] flex h-[20px] w-[293px] justify-end border border-[#bdbdbd] bg-[#a0a0a0]"><div className="flex w-[13px] items-center justify-center bg-[#8c8c8c]"><Down c="text-[#aaa]" /></div></div>
      <div className="flex w-[31px] justify-center pb-[2px] pl-[2px]"><I s={15}><path d="M2 2h9v4l5 1v10H6V7H2z" fill="#ececec" /><path d="M16 0l-5 8" stroke="#d9c090" strokeWidth="1.500" /></I></div>
      <div className="h-[20px] w-[576px] border border-[#bdbdbd] bg-[#a0a0a0]" />
      <div className="mb-px ml-[11px] h-[15px] w-[12px] bg-gradient-to-br from-[#f4f4f8] to-[#ccd2de]" />
      <div className="mb-px ml-[17px] flex"><T w={47}>P: 0.0 fps</T><T w={53} className="ml-[20px]">RT: 0.0 fps</T><T w={17} className="ml-[28px]">0/0</T></div>
    </div>
  );
}

const TaskBtn = ({ c, children }) => (
  <div className={"flex h-[39px] items-center justify-center rounded-[3px] border border-[#d9e9f3] " + c}>{children}</div>
);
const Blocks = ({ s }) => (
  <svg width={s} height={s} viewBox="0 0 32 32"><path d="M0 0h32v32H0z" fill="#7a7af4" /><path d="M3.500 3.500h25v25h-25z" fill="none" stroke="#f2f2ff" strokeWidth="1.800" /><path d="M7 7h10v10H7z" fill="#f4f4ff" /><path d="M8 12h4v4H8zM13 8h3v3h-3z" fill="#7a7af4" /><path d="M20 20h4v4h-4z" fill="none" stroke="#f2f2ff" strokeWidth="1.500" /></svg>
);

function Taskbar() {
  return (
    <div className="relative flex h-[40px] border-t border-[#cfe0ea] bg-[linear-gradient(90deg,#8ba6c2,#92b4cf_4%,#95c8e4_18%,#9bcde9_28%,#8fbfe2_45%,#8fbbe3_55%,#8bb3da_71%,#85a3c4_78%,#889fbb)]">
      <svg width="120" height="39" viewBox="0 0 120 39" className="absolute left-[1200px] top-0" fill="none">
        <path d="M50 -4Q69 14 90 44" stroke="#d3e6f8" strokeWidth="18" opacity=".25" />
        <path d="M50 -4Q69 14 90 44" stroke="#d6e9fb" strokeWidth="12" opacity=".5" />
        <path d="M50 -4Q69 14 90 44" stroke="#dcedfc" strokeWidth="7" opacity=".8" />
      </svg>
      <div className="flex w-[61px] items-center justify-center pr-[5px]">
        <svg width="38" height="38" viewBox="0 0 38 38"><defs><radialGradient id="orb" cx=".5" cy=".9" r=".9"><stop stopColor="#9fe6f4" /><stop offset=".45" stopColor="#7fa9c4" /><stop offset="1" stopColor="#c5d5e2" /></radialGradient></defs><circle cx="19" cy="19" r="17.500" fill="url(#orb)" stroke="#88a0b5" /><path d="M11 11c3-2 5-1 8 0l-2 8c-3-1-5-1-8 0z" fill="#f0a382" /><path d="M20 12c3 1 5 1 8-1l-2 8c-3 2-5 2-8 0z" fill="#b3da92" /><path d="M9 20c3-1 5-1 8 0l-2 7c-3-1-5-1-8 0z" fill="#a2cdf0" /><path d="M18 21c3 1 5 1 8 0l-2 7c-3 1-5 1-8 0z" fill="#f7e08e" /></svg>
      </div>
      <TaskBtn c="w-[55px] bg-[#b0d2e6]"><svg width="36" height="34" viewBox="0 0 36 34" fill="none"><path d="M9 19h20c0-14-20-13-20 0 0 12 14 13 19 5" stroke="#8cc8f2" strokeWidth="5.500" /><path d="M9 18h20" stroke="#d9effc" strokeWidth="1.500" /><path d="M7 31C-4 28 12 3 28 2c5 0 5 3 3 8" stroke="#f1dd90" strokeWidth="2.800" /></svg></TaskBtn>
      <div className="w-[4px] border-r border-[#d5e6f1]" />
      <TaskBtn c="ml-[5px] w-[60px] bg-[#abd3ea]"><svg width="34" height="34" viewBox="0 0 34 34"><path d="M2 4h10l2 3h18v22H2z" fill="#ecd58e" /><path d="M5 6h4M14 9h4M22 8h5" stroke="#7fb98a" strokeWidth="3" /><path d="M1 11h32v18H1z" fill="#f7e8b0" /><path d="M6 34V23c0-2 2-3 4-3h14c2 0 4 1 4 3v11h-5v-8H11v8z" fill="#b9dff2" /></svg></TaskBtn>
      <TaskBtn c="ml-[4px] w-[61px] bg-[#b3d7eb]"><Blocks s={33} /></TaskBtn>
      <TaskBtn c="ml-[3px] w-[60px] bg-[#dfecf4]"><svg width="33" height="33" viewBox="0 0 33 33"><path d="M0 0h33v33H0z" fill="#888583" /><circle cx="16.500" cy="16.500" r="10.500" fill="#7a7a7a" stroke="#f7a193" strokeWidth="5.500" /><path d="M13.500 13c0-2 6-2 6 0s-1.500 2-2 3v4h-2v-4c-.5-1-2-1-2-3z" fill="#c4c4c4" /></svg></TaskBtn>
      <div className="ml-auto flex items-center">
        <Slot c="w-[24px]"><I s={17}><path d="M2 1h5v5h2v9H1V6h1z" fill="#c6c6c6" /><circle cx="12" cy="12" r="5" fill="#8ed092" /><path d="M9.500 12l2 2 3-4" stroke="#fff" strokeWidth="1.500" /></I></Slot>
        <Slot c="w-[25px]"><Blocks s={16} /></Slot>
        <Slot c="w-[25px]"><Blocks s={16} /></Slot>
        <Slot c="w-[25px]"><I s={16}><circle cx="9" cy="9" r="8" fill="#e8e8e4" stroke="#9c9c90" /><circle cx="9" cy="9" r="4.500" fill="#b5b5a5" /><path d="M5 9h8v4H5z" fill="#f0f0e6" /></I></Slot>
        <Slot c="w-[25px]"><I s={17}><path d="M3 1h4v13l-4-3zM7 3h4v13l-4-3z" fill="#e8d792" /><path d="M11 1h4v12h-4z" fill="#f4e9b8" /><circle cx="12" cy="14" r="3.500" fill="#76c47c" /></I></Slot>
        <Slot c="w-[24px]"><I s={17}><path d="M1 1h16v16H1z" fill="#e0e0e0" stroke="#b4b4b4" /><path d="M6 5l7 8M4 6c0-3 4-3 4 0s-4 3-4 0" stroke="#a2a2a2" strokeWidth="1.500" /></I></Slot>
        <Slot c="w-[25px]"><I s={17}><path d="M1 7l4-3h11l1 3v6H1z" fill="#d3d6d8" /><path d="M7 11l3 4 6-7" stroke="#7ec98a" strokeWidth="3" /></I></Slot>
        <Slot c="w-[24px]"><I s={16}><path d="M2 6h4l5-5v16l-5-5H2z" fill="#dc9b8c" /><path d="M14 5v8" stroke="#a8a0a8" strokeWidth="1.500" /></I></Slot>
        <Slot c="w-[25px]"><I s={17}><path d="M3 1v16" stroke="#eee" strokeWidth="1.800" /><path d="M4 2h11v8H4z" fill="#f2f2f2" /><circle cx="12" cy="12" r="5" fill="#e58585" /><path d="M10 10l4 4M14 10l-4 4" stroke="#fff" strokeWidth="1.500" /></I></Slot>
        <Slot c="w-[25px]"><I s={17}><path d="M5 4h11v8H5zM10 12v4M6 16h9M2 1v5M0 3h5" stroke="#eeeeee" strokeWidth="1.500" /></I></Slot>
        <Slot c="w-[22px]"><I s={16}><path d="M4 6h3l4-5v16l-4-5H4z" fill="#f4f4f4" /><path d="M14 5c2 2 2 6 0 8" stroke="#eee" strokeWidth="1.300" /></I></Slot>
        <div className="ml-[15px] flex w-[63px] flex-col items-center text-[12px] leading-[17px] text-[#f6f9fc]"><T w={43}>4:27 PM</T><T w={60}>06/03/2013</T></div>
        <div className="ml-[10px] mr-[1px] h-[38px] w-[14px] border border-[#b9cede] bg-gradient-to-b from-[#8398af] to-[#86a7c9]" />
      </div>
    </div>
  );
}

export default function App() {
  return (
    <div className="relative h-[1080px] w-[1914px] overflow-hidden bg-[#808080] pl-[90px] font-['Open_Sans','Noto_Sans',sans-serif]">
      <div className="flex h-[1080px] w-[1728px] flex-col bg-[#8e8e8e]">
        <TitleBar />
        <Ribbon />
        <div className="mt-[4px] flex"><Viewports /><CapturePanel /></div>
        <DataManagement />
        <Timeline />
        <StatusBar />
        <Taskbar />
      </div>
      <svg className="absolute left-[162px] top-[777px]" width="16" height="22" viewBox="0 0 16 22"><path d="M1 1v16l4-3.500L8 20l3-1.500-3-6 5-.500z" fill="#fcfcfc" stroke="#8f8f8f" /></svg>
      <svg className="absolute left-[815px] top-[350px]" width="270" height="385" viewBox="815 350 270 385">
        <path d="M828 376C828 367 830 364 834 363.700C838 363.500 841 366 845 369.300L1056 527C1064 533 1069 538 1069 542.500C1069 547 1064 550 1060 552.700L848 712C844 715.500 840 718 834.500 718C830 718 828 713 828 706Z" fill="#404040" stroke="#fff" strokeWidth="10" />
      </svg>
    </div>
  );
}
